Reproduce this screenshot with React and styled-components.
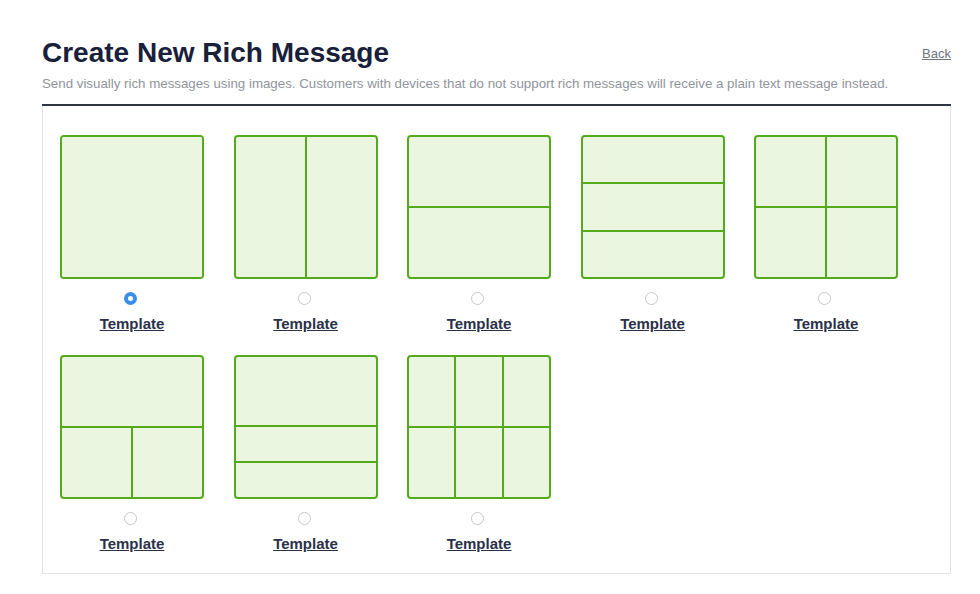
import React, { useState } from 'react';
import styled, { createGlobalStyle } from 'styled-components';

const GlobalStyle = createGlobalStyle`
  html, body {
    margin: 0;
    padding: 0;
    background: #fff;
    font-family: "Liberation Sans", Arial, sans-serif;
  }
`;

// each template: grid columns, rows, and the cells with their spans
const templates = [
  { cols: '1fr', rows: '1fr', cells: [{}] },
  { cols: '1fr 1fr', rows: '1fr', cells: [{}, {}] },
  { cols: '1fr', rows: '1fr 1fr', cells: [{}, {}] },
  { cols: '1fr', rows: '1fr 1fr 1fr', cells: [{}, {}, {}] },
  { cols: '1fr 1fr', rows: '1fr 1fr', cells: [{}, {}, {}, {}] },
  { cols: '1fr 1fr', rows: '1fr 1fr', cells: [{ span: 2 }, {}, {}] },
  { cols: '1fr', rows: '2fr 1fr 1fr', cells: [{}, {}, {}] },
  { cols: '1fr 1fr 1fr', rows: '1fr 1fr', cells: [{}, {}, {}, {}, {}, {}] },
];

function App() {
  const [selected, setSelected] = useState(0);

  return (
    <Page>
      <GlobalStyle />
      <Header>
        <div>
          <Title>Create New Rich Message</Title>
          <Subtitle>
            Send visually rich messages using images. Customers with devices that do not support rich messages will receive a plain text message instead.
          </Subtitle>
        </div>
        <BackLink href="#">Back</BackLink>
      </Header>

      <Panel>
        {templates.map((t, i) => (
          <Option key={i} onClick={() => setSelected(i)}>
            <Tile cols={t.cols} rows={t.rows}>
              {t.cells.map((c, j) => (
                <Cell key={j} span={c.span} />
              ))}
            </Tile>
            <Radio checked={selected === i} />
            <Label href="#" onClick={(e) => e.preventDefault()}>Template</Label>
          </Option>
        ))}
      </Panel>
    </Page>
  );
}

const Page = styled.div`
  padding: 36px 29px 0 42px;
`;

const Header = styled.div`
  display: flex;
  justify-content: space-between;
  align-items: flex-start;
  padding-bottom: 11px;
  border-bottom: 2px solid #2f3542;
`;

const Title = styled.h1`
  margin: 0;
  font-size: 28px;
  line-height: 34px;
  font-weight: 700;
  color: #18203a;
`;

const Subtitle = styled.p`
  margin: 5px 0 0;
  font-size: 13.3px;
  line-height: 18px;
  color: #8f949c;
`;

const BackLink = styled.a`
  margin-top: 10px;
  font-size: 13px;
  color: #6b7280;
  text-decoration: underline;
`;

const Panel = styled.div`
  display: flex;
  flex-wrap: wrap;
  column-gap: 29.5px;
  row-gap: 22px;
  padding: 29px 17px 20px;
  border: 1px solid #e4e4e4;
  border-top: none;
`;

const Option = styled.div`
  width: 144px;
  display: flex;
  flex-direction: column;
  align-items: center;
  cursor: pointer;
`;

const Tile = styled.div`
  box-sizing: border-box;
  width: 144px;
  height: 144px;
  display: grid;
  grid-template-columns: ${(p) => p.cols};
  grid-template-rows: ${(p) => p.rows};
  gap: 2px;
  border: 2px solid #55a91d;
  border-radius: 4px;
  background: #55a91d;
  overflow: hidden;
`;

const Cell = styled.div`
  background: #eaf6e0;
  grid-column: ${(p) => (p.span ? `span ${p.span}` : 'auto')};
`;

const Radio = styled.span`
  box-sizing: border-box;
  margin: 13px 3px 0 0;
  width: 13px;
  height: 13px;
  border-radius: 50%;
  border: ${(p) => (p.checked ? '4px solid #3b8fea' : '1px solid #c8c8c8')};
  background: #fff;
`;

const Label = styled.a`
  margin-top: 9px;
  font-size: 15px;
  line-height: 19px;
  font-weight: 700;
  color: #2a3148;
  text-decoration: underline;
`;

export default App;
